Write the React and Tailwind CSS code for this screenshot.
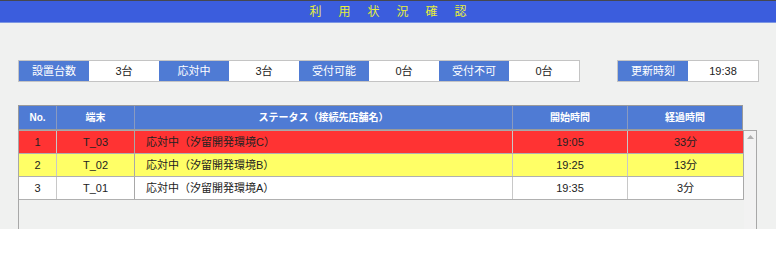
const STATS = [
  { label: '設置台数', value: '3台' },
  { label: '応対中', value: '3台' },
  { label: '受付可能', value: '0台' },
  { label: '受付不可', value: '0台' },
];

const ROWS = [
  { no: 1, term: 'T_03', status: '応対中（汐留開発環境C）', start: '19:05', elapsed: '33分', bg: 'bg-[#ff3333]' },
  { no: 2, term: 'T_02', status: '応対中（汐留開発環境B）', start: '19:25', elapsed: '13分', bg: 'bg-[#ffff66]' },
  { no: 3, term: 'T_01', status: '応対中（汐留開発環境A）', start: '19:35', elapsed: '3分', bg: 'bg-white' },
];

function StatBox({ label, value }) {
  return (
    <>
      <div className="w-[70px] h-full flex items-center justify-center bg-[#4f7bd4] text-white">{label}</div>
      <div className="w-[70px] h-full flex items-center justify-center bg-white text-[#222]">{value}</div>
    </>
  );
}

export default function App() {
  return (
    <div className="w-[776px] h-[270px] bg-white text-[11px] font-['Liberation_Sans','Noto_Sans_CJK_JP',sans-serif]">
      {/* title bar */}
      <div className="h-[1px] bg-[#45474f]" />
      <div className="h-[21px] bg-[#3b5ddd] flex items-center justify-center text-[#e6ee3a] text-[12px] tracking-[17px] pl-[17px]">
        利用状況確認
      </div>
      <div className="h-[1px] bg-[#7d97e3]" />

      <div className="h-[206px] bg-[#f0f1f0] pl-[18px] pt-[37px]">
        {/* counters */}
        <div className="flex items-center h-[22px]">
          <div className="flex h-full border border-[#c4c4c4]">
            {STATS.map((s) => (
              <StatBox key={s.label} {...s} />
            ))}
          </div>
          <div className="flex h-full border border-[#c4c4c4] ml-[37px]">
            <StatBox label="更新時刻" value="19:38" />
          </div>
        </div>

        {/* table header */}
        <div className="mt-[23px] w-[725px] h-[25px] flex bg-[#4f7bd4] text-white font-bold text-[10px] border border-[#9a9a9a]">
          <div className="w-[38px] flex items-center justify-center border-r border-[#8a9ac0]">No.</div>
          <div className="w-[78px] flex items-center justify-center border-r border-[#8a9ac0]">端末</div>
          <div className="w-[378px] flex items-center justify-center border-r border-[#8a9ac0]">ステータス（接続先店舗名）</div>
          <div className="w-[115px] flex items-center justify-center border-r border-[#8a9ac0]">開始時間</div>
          <div className="flex-1 flex items-center justify-center">経過時間</div>
        </div>

        {/* body */}
        <div className="w-[739px] h-[99px] flex border-l border-r border-t border-[#a8a8a8]">
          <div className="w-[725px]">
            {ROWS.map((r) => (
              <div key={r.no} className={`flex h-[23px] border-b border-[#b0b0b0] text-[#222] ${r.bg}`}>
                <div className="w-[38px] flex items-center justify-center border-r border-[#c8c8c8]">{r.no}</div>
                <div className="w-[78px] flex items-center justify-center border-r border-[#a8a8a8]">{r.term}</div>
                <div className="w-[378px] flex items-center pl-[11px] border-r border-[#c8c8c8]">{r.status}</div>
                <div className="w-[115px] flex items-center justify-center border-r border-[#c8c8c8]">{r.start}</div>
                <div className="flex-1 flex items-center justify-center border-r border-[#a8a8a8]">{r.elapsed}</div>
              </div>
            ))}
          </div>
          <div className="flex-1 bg-[#f2f2f2] flex justify-center pt-[4px]">
            <svg width="7" height="4" viewBox="0 0 7 4">
              <path d="M0 4 L3.5 0 L7 4 Z" fill="#b0b0b0" />
            </svg>
          </div>
        </div>
      </div>
    </div>
  );
}
